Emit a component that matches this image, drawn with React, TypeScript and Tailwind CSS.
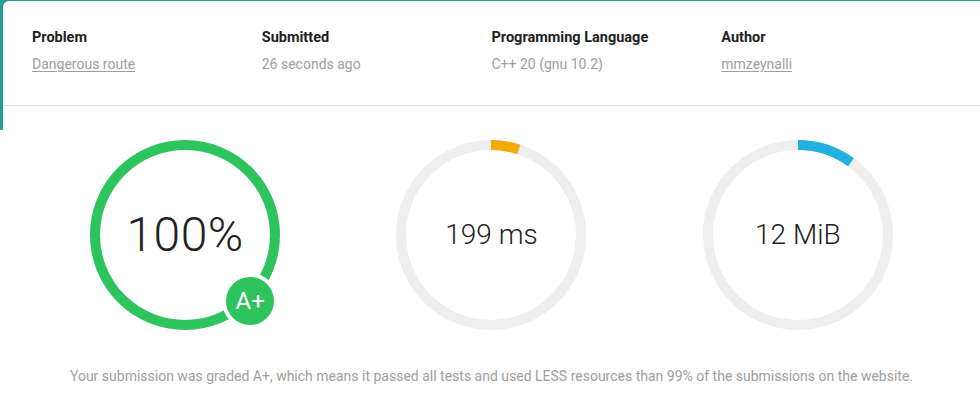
import React from 'react';

const font = { fontFamily: 'Roboto, "Liberation Sans", sans-serif' };

const meta = [
  { label: 'Problem', value: 'Dangerous route', link: true },
  { label: 'Submitted', value: '26 seconds ago', link: false },
  { label: 'Programming Language', value: 'C++ 20 (gnu 10.2)', link: false },
  { label: 'Author', value: 'mmzeynalli', link: true },
];

const Ring = ({ pct, color, children }: { pct: number; color: string; children: React.ReactNode }) => {
  const r = 90;
  const c = 2 * Math.PI * r;
  return (
    <div className="relative w-[190px] h-[190px]">
      <svg width="190" height="190" viewBox="0 0 190 190" className="-rotate-90">
        <circle cx="95" cy="95" r={r} fill="none" stroke="#eeeeee" strokeWidth="10" />
        <circle
          cx="95"
          cy="95"
          r={r}
          fill="none"
          stroke={color}
          strokeWidth="10"
          strokeDasharray={`${c * pct} ${c}`}
        />
      </svg>
      <div className="absolute inset-0 flex items-center justify-center">{children}</div>
    </div>
  );
};

export default function App() {
  return (
    <div
      style={font}
      className="w-[980px] h-[401px] overflow-hidden bg-[linear-gradient(#279d96_130px,white_130px)] pt-px pl-[3px]"
    >
      <div className="bg-white rounded-tl-[6px] h-full">
        {/* header */}
        <div className="flex px-[29px] pt-[27px] pb-[31px] border-b border-[#e6e6e6]">
          {meta.map((m) => (
            <div key={m.label} className="w-[230px]">
              <p className="text-[14.5px] leading-5 font-bold text-[#222]">{m.label}</p>
              <p
                className={`mt-[6px] text-[14px] leading-5 text-[#9e9e9e] ${m.link ? 'underline underline-offset-2' : ''}`}
              >
                {m.value}
              </p>
            </div>
          ))}
        </div>

        {/* rings */}
        <div className="grid grid-cols-3 px-[29px] pt-[34px] justify-items-center">
          <div className="relative">
            <Ring pct={1} color="#2ec45d">
              <span className="text-[48px] font-light text-[#222] tracking-[0.5px]">100%</span>
            </Ring>
            <div className="absolute left-[132px] top-[133px] w-[56px] h-[56px] rounded-full bg-white flex items-center justify-center">
              <div className="w-[48px] h-[48px] rounded-full bg-[#2ec45d] flex items-center justify-center text-white text-[24px]">
                A+
              </div>
            </div>
          </div>
          <Ring pct={0.05} color="#f7a800">
            <span className="text-[28px] font-light text-[#222]">199 ms</span>
          </Ring>
          <Ring pct={0.1} color="#22b0e0">
            <span className="text-[28px] font-light text-[#222]">12 MiB</span>
          </Ring>
        </div>

        <p className="mt-[36px] text-center text-[14px] leading-5 text-[#9e9e9e]">
          Your submission was graded A+, which means it passed all tests and used LESS resources than 99% of the
          submissions on the website.
        </p>
      </div>
    </div>
  );
}
